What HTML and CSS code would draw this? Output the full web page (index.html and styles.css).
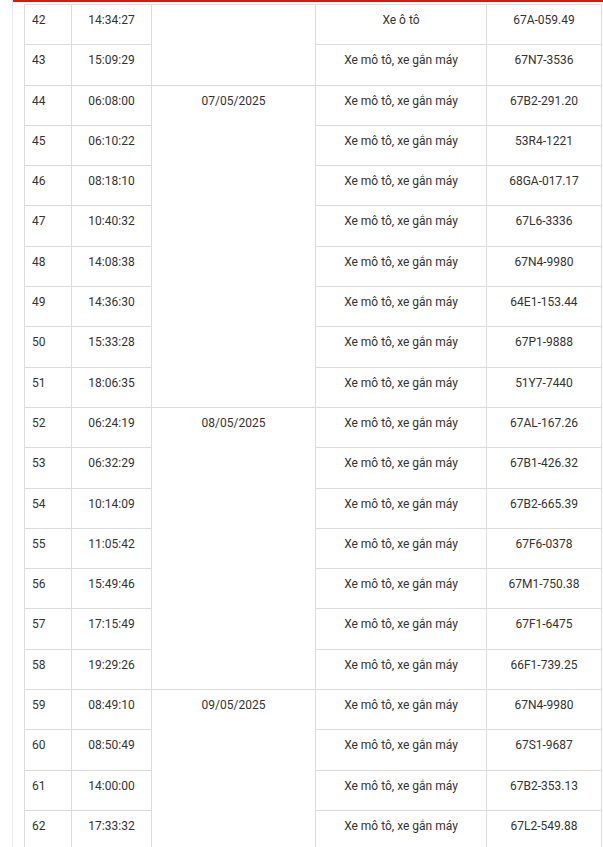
FILE: index.html
```html
<!DOCTYPE html>
<html lang="vi">
<head>
<meta charset="utf-8">
<title>Danh sách phương tiện</title>
<link rel="stylesheet" href="styles.css">
</head>
<body>
<div class="page">
  <div class="topbar"></div>
  <table class="violations">
    <colgroup>
      <col class="c-no"><col class="c-time"><col class="c-date"><col class="c-type"><col class="c-plate">
    </colgroup>
    <tbody>
      <tr><td class="no">42</td><td>14:34:27</td><td rowspan="2"></td><td>Xe ô tô</td><td>67A-059.49</td></tr>
      <tr><td class="no">43</td><td>15:09:29</td><td>Xe mô tô, xe gắn máy</td><td>67N7-3536</td></tr>
      <tr><td class="no">44</td><td>06:08:00</td><td rowspan="8">07/05/2025</td><td>Xe mô tô, xe gắn máy</td><td>67B2-291.20</td></tr>
      <tr><td class="no">45</td><td>06:10:22</td><td>Xe mô tô, xe gắn máy</td><td>53R4-1221</td></tr>
      <tr><td class="no">46</td><td>08:18:10</td><td>Xe mô tô, xe gắn máy</td><td>68GA-017.17</td></tr>
      <tr><td class="no">47</td><td>10:40:32</td><td>Xe mô tô, xe gắn máy</td><td>67L6-3336</td></tr>
      <tr><td class="no">48</td><td>14:08:38</td><td>Xe mô tô, xe gắn máy</td><td>67N4-9980</td></tr>
      <tr><td class="no">49</td><td>14:36:30</td><td>Xe mô tô, xe gắn máy</td><td>64E1-153.44</td></tr>
      <tr><td class="no">50</td><td>15:33:28</td><td>Xe mô tô, xe gắn máy</td><td>67P1-9888</td></tr>
      <tr><td class="no">51</td><td>18:06:35</td><td>Xe mô tô, xe gắn máy</td><td>51Y7-7440</td></tr>
      <tr><td class="no">52</td><td>06:24:19</td><td rowspan="7">08/05/2025</td><td>Xe mô tô, xe gắn máy</td><td>67AL-167.26</td></tr>
      <tr><td class="no">53</td><td>06:32:29</td><td>Xe mô tô, xe gắn máy</td><td>67B1-426.32</td></tr>
      <tr><td class="no">54</td><td>10:14:09</td><td>Xe mô tô, xe gắn máy</td><td>67B2-665.39</td></tr>
      <tr><td class="no">55</td><td>11:05:42</td><td>Xe mô tô, xe gắn máy</td><td>67F6-0378</td></tr>
      <tr><td class="no">56</td><td>15:49:46</td><td>Xe mô tô, xe gắn máy</td><td>67M1-750.38</td></tr>
      <tr><td class="no">57</td><td>17:15:49</td><td>Xe mô tô, xe gắn máy</td><td>67F1-6475</td></tr>
      <tr><td class="no">58</td><td>19:29:26</td><td>Xe mô tô, xe gắn máy</td><td>66F1-739.25</td></tr>
      <tr><td class="no">59</td><td>08:49:10</td><td rowspan="4">09/05/2025</td><td>Xe mô tô, xe gắn máy</td><td>67N4-9980</td></tr>
      <tr><td class="no">60</td><td>08:50:49</td><td>Xe mô tô, xe gắn máy</td><td>67S1-9687</td></tr>
      <tr><td class="no">61</td><td>14:00:00</td><td>Xe mô tô, xe gắn máy</td><td>67B2-353.13</td></tr>
      <tr><td class="no">62</td><td>17:33:32</td><td>Xe mô tô, xe gắn máy</td><td>67L2-549.88</td></tr>
    </tbody>
  </table>
</div>
</body>
</html>
```

FILE: styles.css
```css
html, body {
  margin: 0;
  padding: 0;
  background: #fff;
}
body {
  font-family: Roboto, "Liberation Sans", Arial, sans-serif;
  color: #333;
  overflow: hidden;
}
.page {
  margin-left: 12px;
  border-left: 1px solid #ebebeb;
  min-height: 847px;
}
.topbar {
  height: 2px;
  background: #d0181e;
  margin-bottom: 2px;
}
.violations {
  border-collapse: collapse;
  margin-left: 11px;
  width: 577px;
  table-layout: fixed;
  font-size: 12px;
}
.c-no { width: 47px; }
.c-time { width: 80px; }
.c-date { width: 164px; }
.c-type { width: 171px; }
.c-plate { width: 115px; }
.violations td {
  border: 1px solid #dcdcdc;
  height: 40.3px;
  box-sizing: border-box;
  padding: 8px 4px 0;
  vertical-align: top;
  text-align: center;
  line-height: 14px;
  white-space: nowrap;
}
.violations td.no {
  text-align: left;
  padding-left: 7px;
}
```
